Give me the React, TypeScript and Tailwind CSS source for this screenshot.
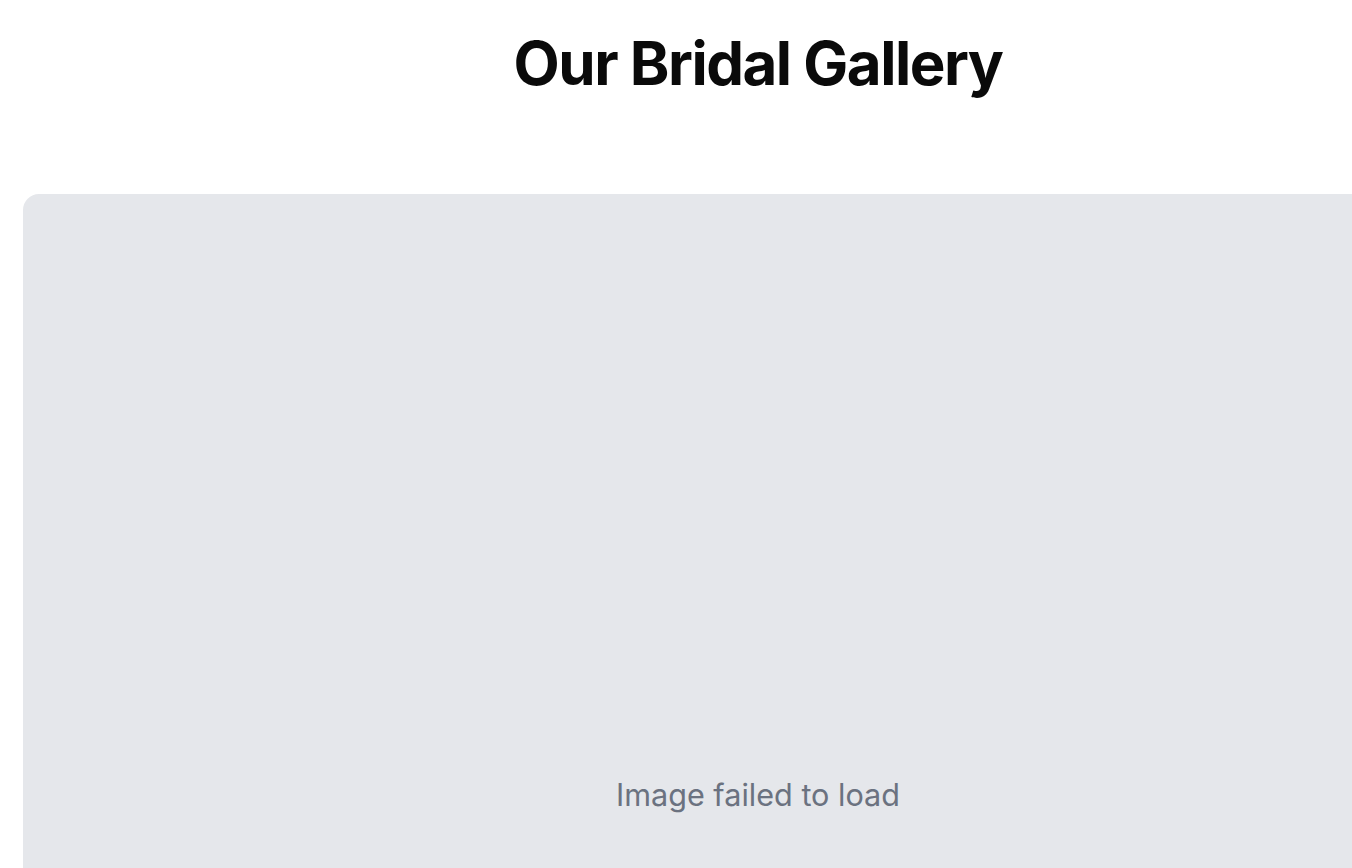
export default function App() {
  return (
    <div className="w-[1516px] bg-white px-[23px] pt-[33px] pb-10" style={{ fontFamily: "Inter, 'Noto Sans', sans-serif" }}>
      <h1 className="text-center text-6xl font-bold leading-none tracking-tight text-[#0a0a0a]">Our Bridal Gallery</h1>
      <div className="mt-[101px] flex h-[1202px] items-center justify-center rounded-2xl bg-[#e5e7eb]">
        <span className="text-[30.6px] text-[#6b7280]">Image failed to load</span>
      </div>
    </div>
  );
}
